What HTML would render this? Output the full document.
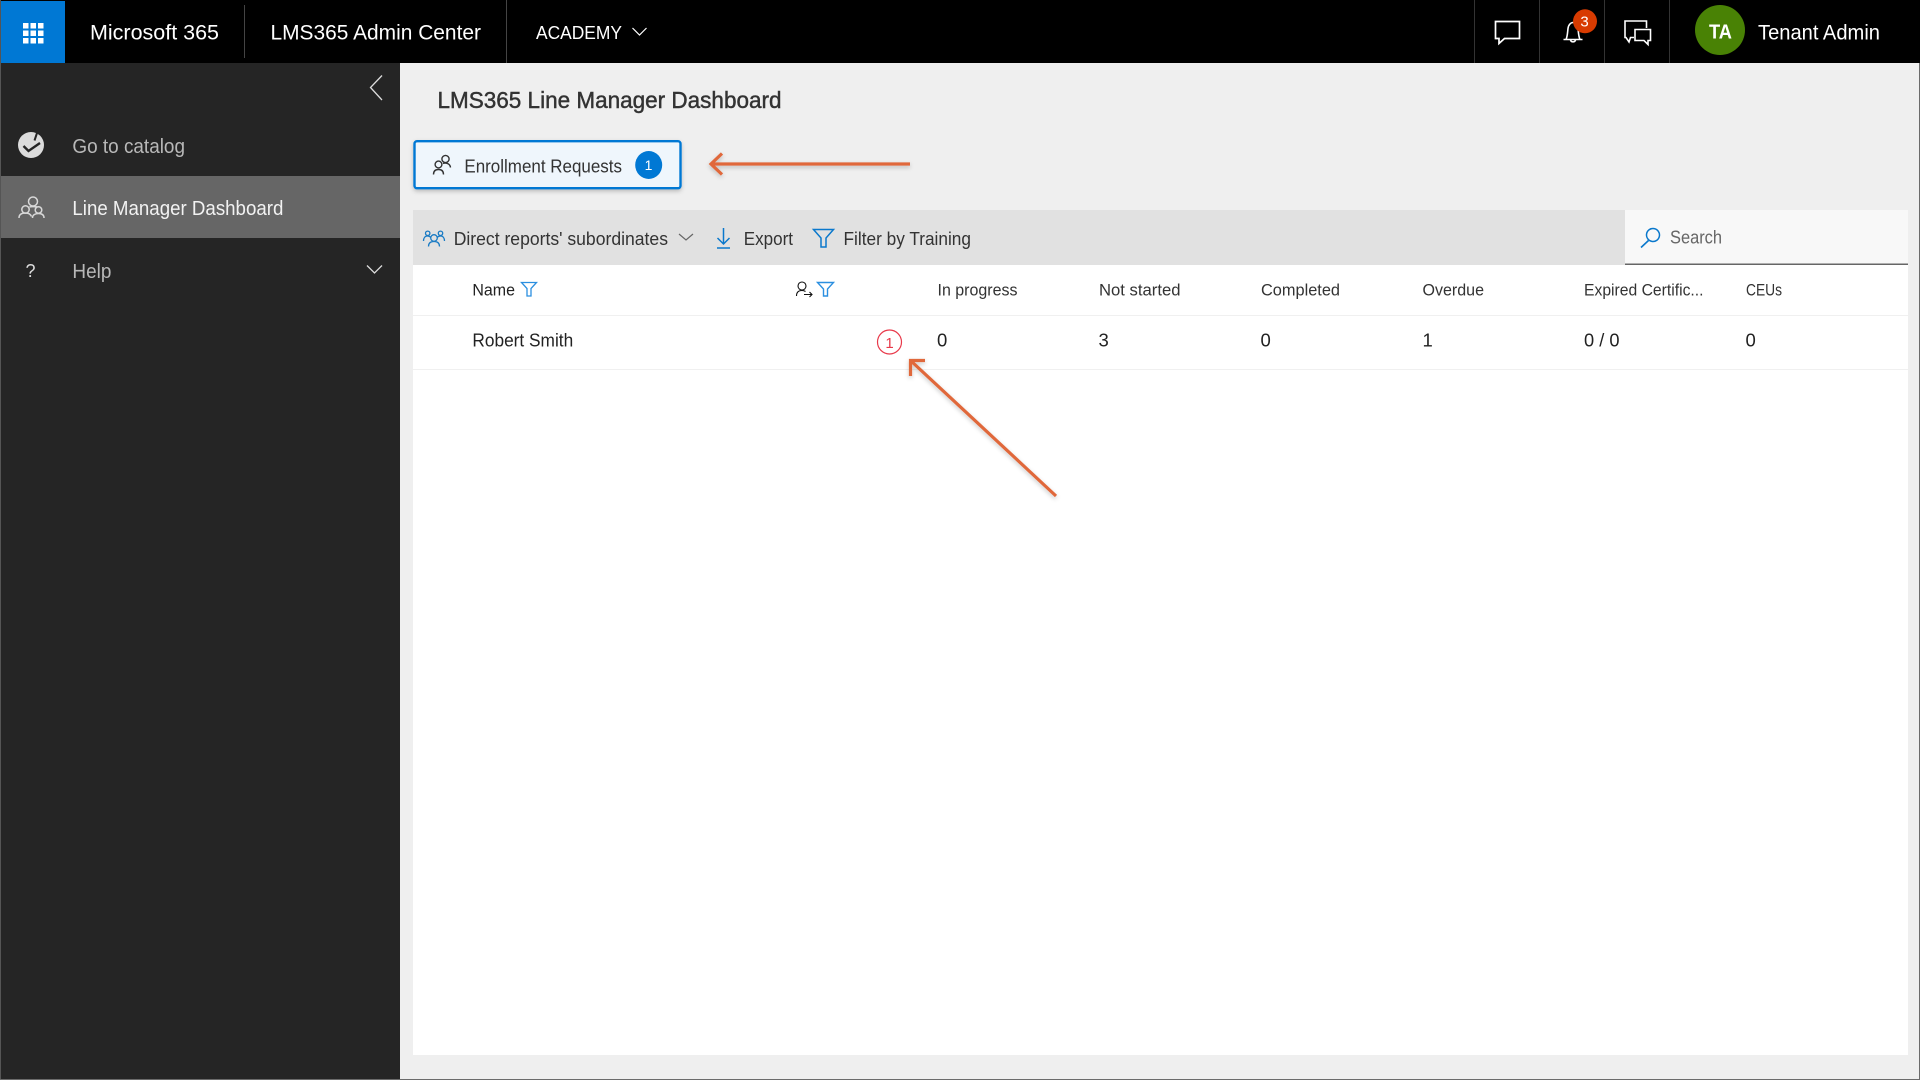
<!DOCTYPE html>
<html lang="en">
<head>
<meta charset="utf-8">
<title>LMS365 Line Manager Dashboard</title>
<style>
html,body{margin:0;padding:0;background:#efefef;width:1920px;height:1080px;overflow:hidden}
svg{display:block}
text{font-family:"Liberation Sans",sans-serif;}
</style>
</head>
<body>
<svg xmlns="http://www.w3.org/2000/svg" width="1920" height="1080" viewBox="0 0 1920 1080">
<defs>
<filter id="sh" x="-10%" y="-30%" width="120%" height="160%"><feDropShadow dx="0" dy="2" stdDeviation="2" flood-color="#000" flood-opacity=".22"/></filter>
</defs>
<rect width="1920" height="1080" fill="#efefef"/>
<!-- top bar -->
<rect width="1920" height="63" fill="#000"/>
<rect x="1" y="1" width="64" height="62" fill="#0078d4"/>
<g fill="#fff">
<rect x="23" y="23" width="5.5" height="5.5"/><rect x="30.5" y="23" width="5.5" height="5.5"/><rect x="38" y="23" width="5.5" height="5.5"/>
<rect x="23" y="30.5" width="5.5" height="5.5"/><rect x="30.5" y="30.5" width="5.5" height="5.5"/><rect x="38" y="30.5" width="5.5" height="5.5"/>
<rect x="23" y="38" width="5.5" height="5.5"/><rect x="30.5" y="38" width="5.5" height="5.5"/><rect x="38" y="38" width="5.5" height="5.5"/>
</g>
<text x="90" y="39.500" font-size="21" fill="#fff" textLength="129" lengthAdjust="spacingAndGlyphs">Microsoft 365</text>
<rect x="244" y="5" width="1" height="53" fill="#444"/>
<text x="270.500" y="39.500" font-size="21" fill="#fff" textLength="210.500" lengthAdjust="spacingAndGlyphs">LMS365 Admin Center</text>
<rect x="506" y="0" width="1" height="63" fill="#444"/>
<text x="536" y="39" font-size="18.500" fill="#fff" textLength="86" lengthAdjust="spacingAndGlyphs">ACADEMY</text>
<path d="M632.500 28l7 7 7-7" fill="none" stroke="#fff" stroke-width="1.200"/>
<g fill="#333"><rect x="1474" y="0" width="1" height="63"/><rect x="1539" y="0" width="1" height="63"/><rect x="1604" y="0" width="1" height="63"/><rect x="1669" y="0" width="1" height="63"/></g>
<!-- chat -->
<path d="M1495.500 21.500h24v17h-15l-5.500 5v-5h-3.500z" fill="none" stroke="#fff" stroke-width="1.700"/>
<!-- bell -->
<path d="M1563.500 39.500h19M1566 39.500c1.500-3 1.500-7 2-11 .5-4 3-6 5-6s4.500 2 5 6c.5 4 .5 8 2 11M1570.500 40c.5 2.500 4.500 2.500 5 0" fill="none" stroke="#fff" stroke-width="1.600"/>
<circle cx="1585" cy="21.300" r="12" fill="#d83b01"/>
<text x="1584.500" y="26.500" font-size="15" fill="#fff" text-anchor="middle">3</text>
<!-- chat 2 -->
<path d="M1634 37.500h-3.500l-1.500 4.500-3-4.500h-1v-16.500h21.500v7M1635 29.500h15.500v11h-2.500v4l-4-4h-9z" fill="none" stroke="#fff" stroke-width="1.600"/>
<!-- avatar -->
<circle cx="1720" cy="30" r="25" fill="#498205"/>
<text x="1709" y="38.500" font-size="20.500" font-weight="700" fill="#fff" textLength="23" lengthAdjust="spacingAndGlyphs">TA</text>
<text x="1758" y="39.500" font-size="21" fill="#fff" textLength="122" lengthAdjust="spacingAndGlyphs">Tenant Admin</text>

<!-- sidebar -->
<rect x="0" y="63" width="400" height="1017" fill="#252525"/>
<path d="M382 75.500l-11.500 12 11.500 12.500" fill="none" stroke="#ddd" stroke-width="1.300"/>
<circle cx="31" cy="145" r="13" fill="#dcdcdc"/>
<path d="M23.500 146l5 5 11.500-8" fill="none" stroke="#252525" stroke-width="2.400"/>
<path d="M37.500 131.500l-3 9" fill="none" stroke="#252525" stroke-width="2"/>
<text x="72.400" y="153" font-size="20.500" fill="#b8b8b8" textLength="112.600" lengthAdjust="spacingAndGlyphs">Go to catalog</text>
<rect x="1" y="176" width="399" height="62" fill="#666"/>
<g fill="none" stroke="#d8d8d8" stroke-width="1.500">
<circle cx="33" cy="201.500" r="4.500"/>
<circle cx="25.500" cy="209.500" r="3.700"/>
<circle cx="38.500" cy="210" r="3.300"/>
<path d="M19 218c0-3.500 2.500-5 6.500-5 2.500 0 5 1 6 3.500M32.500 218c0-3 2.500-4.500 6-4.500s5.500 1.500 5.500 4.500M29.500 207c1-.5 6-.5 7.500 0"/>
</g>
<text x="72.400" y="215" font-size="20.500" fill="#f2f2f2" textLength="211" lengthAdjust="spacingAndGlyphs">Line Manager Dashboard</text>
<text x="30.500" y="277" font-size="18" fill="#ddd" text-anchor="middle">?</text>
<text x="72.400" y="278" font-size="20.500" fill="#b8b8b8" textLength="39" lengthAdjust="spacingAndGlyphs">Help</text>
<path d="M367 265.500l7.500 7.500 7.500-7.500" fill="none" stroke="#ddd" stroke-width="1.300"/>

<!-- title -->
<text x="437.500" y="108" font-size="23" fill="#333" stroke="#333" stroke-width=".45" textLength="344" lengthAdjust="spacingAndGlyphs">LMS365 Line Manager Dashboard</text>

<!-- enrollment button -->
<rect x="414.500" y="141.200" width="266" height="47" rx="2.500" fill="#eff6fc" stroke="#0078d4" stroke-width="2.400" filter="url(#sh)"/>
<g fill="none" stroke="#333" stroke-width="1.400">
<circle cx="445.500" cy="159" r="3.600"/>
<circle cx="438.500" cy="164.500" r="3.400"/>
<path d="M433.500 174.500c0-3 1.500-5 5-5s5 2 5 5M443 163.500c2-1 7-.5 7.500 4"/>
</g>
<text x="464.400" y="172.500" font-size="18.500" fill="#333" textLength="157.600" lengthAdjust="spacingAndGlyphs">Enrollment Requests</text>
<ellipse cx="648.700" cy="165" rx="13.500" ry="14" fill="#0078d4"/>
<text x="648.500" y="170" font-size="14" fill="#fff" text-anchor="middle">1</text>

<!-- white panel -->
<rect x="413" y="265" width="1495" height="790" fill="#fff"/>
<rect x="413" y="210" width="1495" height="55" fill="#e1e1e1"/>
<rect x="1625" y="210" width="283" height="54" fill="#f8f8f8"/>
<rect x="1625" y="263.500" width="283" height="1.500" fill="#666"/>
<!-- toolbar -->
<g fill="none" stroke="#1a7bc4" stroke-width="1.300">
<circle cx="434" cy="238" r="3.300"/>
<circle cx="427.700" cy="233.300" r="2.200"/>
<circle cx="440.500" cy="233.300" r="2.200"/>
<path d="M428.500 246.500c0-3.500 2-5 5.500-5s5.500 1.500 5.500 5M423.500 241c0-3 1.500-5 4-5 1.500 0 2.500 .5 3.500 1.500M444.500 241c0-3-1.500-5-4-5-1.500 0-2.500 .5-3.500 1.500"/>
</g>
<text x="453.700" y="245" font-size="18.500" fill="#333" textLength="214.300" lengthAdjust="spacingAndGlyphs">Direct reports' subordinates</text>
<path d="M679 234l7 6 7-6" fill="none" stroke="#666" stroke-width="1.200"/>
<path d="M723.500 228v16M717.500 238l6 6 6-6M717 248h13" fill="none" stroke="#0a78cc" stroke-width="1.500"/>
<text x="743.800" y="245" font-size="18.500" fill="#333" textLength="49.200" lengthAdjust="spacingAndGlyphs">Export</text>
<path d="M813.500 229.500h20l-7.500 8.500v9h-5v-9z" fill="none" stroke="#0a78cc" stroke-width="1.500"/>
<text x="843.500" y="245" font-size="18.500" fill="#333" textLength="127.500" lengthAdjust="spacingAndGlyphs">Filter by Training</text>
<!-- search -->
<circle cx="1653" cy="235" r="6.500" fill="none" stroke="#0a78cc" stroke-width="1.500" transform="rotate(10 1653 235)"/>
<path d="M1648.500 240.500l-7.500 7" fill="none" stroke="#0a78cc" stroke-width="1.600"/>
<text x="1670" y="243.500" font-size="18" fill="#666" textLength="52" lengthAdjust="spacingAndGlyphs">Search</text>

<!-- header row -->
<text x="472.400" y="295.700" font-size="16.500" fill="#222" textLength="42.600" lengthAdjust="spacingAndGlyphs">Name</text>
<path d="M521.500 282.500h15l-5.500 6v7.500h-4v-7.500z" fill="none" stroke="#2b8fe0" stroke-width="1.300"/>
<g fill="none" stroke="#111" stroke-width="1.100">
<circle cx="802" cy="286" r="4"/>
<path d="M796.500 296c0-3.500 2-5.500 5.500-5.500 1.500 0 2.500 .3 3.500 1M804 294.500h8M809.500 292l2.500 2.500-2.500 2.500"/>
</g>
<path d="M817.500 282.500h16l-6 6.500v7h-4v-7z" fill="none" stroke="#2b8fe0" stroke-width="1.400"/>
<text x="937.500" y="295.700" font-size="16.500" fill="#333" textLength="80" lengthAdjust="spacingAndGlyphs">In progress</text>
<text x="1099" y="295.700" font-size="16.500" fill="#333" textLength="81.500" lengthAdjust="spacingAndGlyphs">Not started</text>
<text x="1261" y="295.700" font-size="16.500" fill="#333" textLength="79" lengthAdjust="spacingAndGlyphs">Completed</text>
<text x="1422.500" y="295.700" font-size="16.500" fill="#333" textLength="61.500" lengthAdjust="spacingAndGlyphs">Overdue</text>
<text x="1584" y="295.700" font-size="16.500" fill="#333" textLength="119.500" lengthAdjust="spacingAndGlyphs">Expired Certific...</text>
<text x="1746" y="295.700" font-size="16.500" fill="#333" textLength="36" lengthAdjust="spacingAndGlyphs">CEUs</text>
<rect x="413" y="315" width="1495" height="1" fill="#f0f0f0"/>
<!-- row -->
<text x="472.400" y="346.700" font-size="18.500" fill="#222" textLength="100.800" lengthAdjust="spacingAndGlyphs">Robert Smith</text>
<circle cx="889.500" cy="342" r="12" fill="none" stroke="#e8394a" stroke-width="1.200"/>
<text x="889.500" y="348" font-size="15" fill="#e8394a" text-anchor="middle">1</text>
<text x="937" y="346.700" font-size="18.500" fill="#222">0</text>
<text x="1098.500" y="346.700" font-size="18.500" fill="#222">3</text>
<text x="1260.500" y="346.700" font-size="18.500" fill="#222">0</text>
<text x="1422.500" y="346.700" font-size="18.500" fill="#222">1</text>
<text x="1584" y="346.700" font-size="18.500" fill="#222" textLength="35.500" lengthAdjust="spacingAndGlyphs">0 / 0</text>
<text x="1745.500" y="346.700" font-size="18.500" fill="#222">0</text>
<rect x="413" y="369" width="1495" height="1" fill="#f0f0f0"/>

<!-- arrows -->
<g fill="none" stroke="#e0683a" stroke-width="3.200" filter="url(#sh)">
<path d="M910 164H712M722 153.500L711 164 722 174.500"/>
<path d="M1056 496L910.500 360.500M925 360.500H910.500V376"/>
</g>

<!-- frame -->
<rect x="0" y="0" width="1" height="1080" fill="#555"/>
<rect x="1919" y="63" width="1" height="1017" fill="#6b6b6b"/>
<rect x="0" y="1079" width="1920" height="1" fill="#6b6b6b"/>
</svg>
</body>
</html>
